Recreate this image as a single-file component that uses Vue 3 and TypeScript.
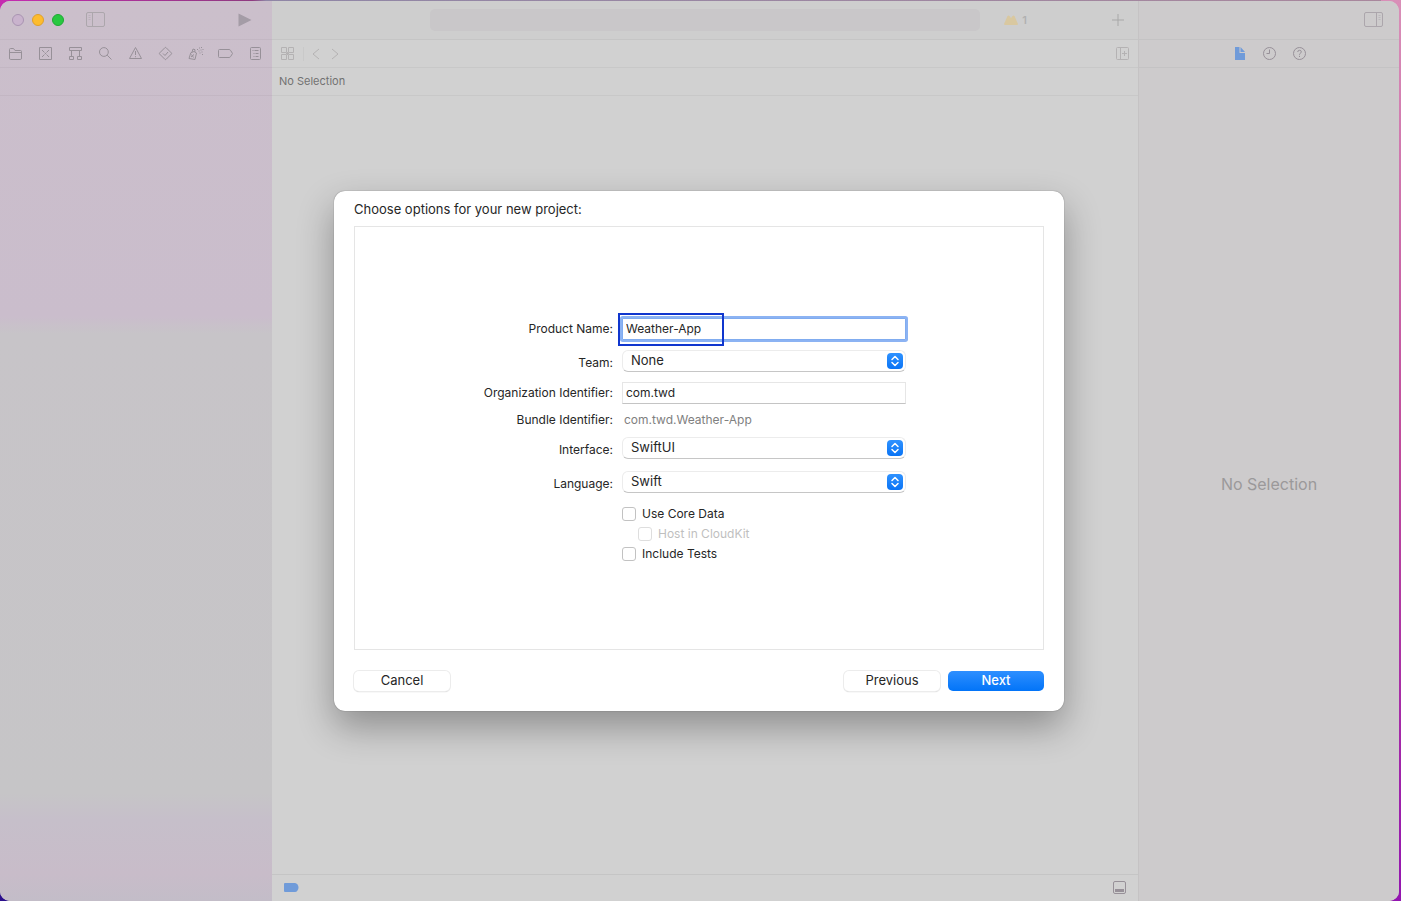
<script setup lang="ts">
import { ref } from 'vue'

const productName = ref('Weather-App')
const team = ref('None')
const organization = ref('com.twd')
const interfaceKind = ref('SwiftUI')
const language = ref('Swift')
const useCoreData = ref(false)
const hostInCloudKit = ref(false)
const includeTests = ref(false)

interface NavItem {
  label: string
  path: string
}

const navigators: NavItem[] = [
  { label: 'Project', path: 'M1.500 12V3.500Q1.500 2.500 2.500 2.500H5.500L7 4.500H12.500Q13.500 4.500 13.500 5.500V12Q13.500 13.500 12.500 13.500H2.500Q1.500 13.500 1.500 12M1.500 6.500h12' },
  { label: 'Source Control', path: 'M1.500 1.500h12v12h-12zM4 4l2.500 2.500M11 4L8.500 6.500M4 11l2.500-2.500M11 11L8.500 8.500M7 7.500h1' },
  { label: 'Symbols', path: 'M1.500 1.500h12v3h-12zM3.500 4.500v6M11.500 4.500v6M1.500 10.500h4v3h-4zM9.500 10.500h4v3h-4z' },
  { label: 'Find', path: 'M10.300 6a4.400 4.400 0 1 1-8.800 0a4.400 4.400 0 1 1 8.800 0M9.200 9.200L13.500 13.500' },
  { label: 'Issues', path: 'M7.500 1.500L13.500 12.500H1.500zM7.500 5v4M7.500 10.200v1' },
  { label: 'Tests', path: 'M6.900 1.700Q7.500 1.100 8.100 1.700L13.300 6.900Q13.900 7.500 13.300 8.100L8.100 13.300Q7.500 13.900 6.900 13.300L1.700 8.100Q1.100 7.500 1.700 6.900zM5 7.500l2 2L10 6' },
  { label: 'Debug', path: 'M2.800 6.800L6 5.500L8.500 7L7 13.500L1 12.500zM4 6L5 3L7 3.700L6.800 6M3.500 8.500l2 3M6 8.500L3 11M9 3.500h1M11 2h1M13 1.500h1M10.500 5h1M12.500 4h1M14.500 3.500h1M11.500 7h1M13.500 6h1M14 8.500h1' },
  { label: 'Breakpoints', path: 'M1.500 3.500h9.500Q12 3.500 12.700 4.500L14.500 7.500L12.700 10.500Q12 11.500 11 11.500H1.500Q.5 11.500 .5 10.500V4.500Q.5 3.500 1.500 3.500' },
  { label: 'Reports', path: 'M3.500 1.500h8q1 0 1 1v10q0 1-1 1h-8q-1 0-1-1v-10q0-1 1-1M4.500 4.500h1M6.500 4.500h4M5.500 7.500h1M7.500 7.500h3M5.500 10.500h1M7.500 10.500h3' },
]
</script>

<template>
  <div class="desktop">
    <div class="window">
      <aside class="navigator">
        <header class="bar title-bar">
          <div class="lights">
            <button class="light close" aria-label="Close"></button>
            <button class="light minimize" aria-label="Minimize"></button>
            <button class="light zoom" aria-label="Zoom"></button>
          </div>
          <button class="icon-button faint" aria-label="Toggle navigator">
            <svg width="20" height="16" viewBox="0 0 20 16"><rect x=".5" y=".5" width="18" height="14" rx="1.500" /><path d="M6.500 .5v14" /><path class="thin" d="M2.500 3.500h2M2.500 5.500h2M2.500 7.500h2" /></svg>
          </button>
          <button class="icon-button run" aria-label="Run">
            <svg width="14" height="14" viewBox="0 0 14 14"><path class="solid" d="M.5 .5L13.500 7L.5 13.500z" /></svg>
          </button>
        </header>
        <nav class="bar nav-icons">
          <button v-for="item in navigators" :key="item.label" class="icon-button" :aria-label="item.label">
            <svg width="16" height="16" viewBox="0 0 16 16"><path :d="item.path" /></svg>
          </button>
        </nav>
        <div class="bar strip"></div>
      </aside>

      <main class="editor">
        <header class="bar title-bar">
          <div class="activity"></div>
          <div class="status">
            <svg width="14" height="10" viewBox="0 0 14 10"><path d="M0 9L3.500 1Q4.500 0 5.500 1L7 3L8.500 1Q9.500 0 10.500 1L14 9Q14 10 13 10H1Q0 10 0 9" /></svg>
            <span>1</span>
          </div>
          <button class="icon-button plus" aria-label="Library">
            <svg width="14" height="14" viewBox="0 0 14 14"><path d="M7 1v12M1 7h12" /></svg>
          </button>
        </header>
        <div class="bar tab-bar">
          <button class="icon-button faint" aria-label="Related items">
            <svg width="14" height="14" viewBox="0 0 14 14"><path d="M.5 .5h5v5h-5zM7.500 .5h5v5h-5zM.5 7.500h5v5h-5zM7.500 7.500h5v5h-5zM5 6.500h3M6.500 5v3" /></svg>
          </button>
          <span class="divider"></span>
          <button class="icon-button faint" aria-label="Back">
            <svg width="8" height="12" viewBox="0 0 8 12"><path d="M7 1L1 6l6 5" /></svg>
          </button>
          <button class="icon-button faint forward" aria-label="Forward">
            <svg width="8" height="12" viewBox="0 0 8 12"><path d="M1 1l6 5l-6 5" /></svg>
          </button>
          <button class="icon-button faint add-editor" aria-label="Add editor">
            <svg width="14" height="14" viewBox="0 0 14 14"><rect x=".5" y=".5" width="12" height="12" rx="1" /><path d="M4.500 .5v12M6 6.500h5M8.500 4v5" /></svg>
          </button>
        </div>
        <div class="bar path-bar">No Selection</div>
        <div class="canvas"></div>
        <footer class="debug-bar">
          <button class="icon-button" aria-label="Breakpoints">
            <svg width="16" height="10" viewBox="0 0 16 10"><path class="blue" d="M1 0H11Q12.500 0 13.500 1.500Q15.500 4.500 13.500 7.500Q12.500 9 11 9H1Q0 9 0 8V1Q0 0 1 0" /></svg>
          </button>
          <button class="icon-button" aria-label="Toggle debug area">
            <svg width="14" height="14" viewBox="0 0 14 14"><rect x=".5" y=".5" width="12" height="12" rx="1.500" /><path class="solid" d="M2 8h9v3H2z" /></svg>
          </button>
        </footer>
      </main>

      <aside class="inspector">
        <header class="bar title-bar">
          <button class="icon-button faint" aria-label="Toggle inspector">
            <svg width="20" height="16" viewBox="0 0 20 16"><rect x=".5" y=".5" width="18" height="14" rx="1.500" /><path d="M12.500 .5v14" /><path class="thin" d="M14.500 3.500h2M14.500 5.500h2M14.500 7.500h2" /></svg>
          </button>
        </header>
        <nav class="bar inspector-icons">
          <button class="icon-button" aria-label="File">
            <svg width="14" height="14" viewBox="0 0 14 14"><path class="blue" d="M2 0h4.500v6H12v7H2zM7.500 0L12 5H7.500z" /></svg>
          </button>
          <button class="icon-button" aria-label="History">
            <svg width="14" height="14" viewBox="0 0 14 14"><circle cx="6.500" cy="6.500" r="6" /><path d="M6.500 2.500v4h-3" /></svg>
          </button>
          <button class="icon-button" aria-label="Help">
            <svg width="14" height="14" viewBox="0 0 14 14"><circle cx="6.500" cy="6.500" r="6" /><path d="M4.700 5Q4.800 3.300 6.500 3.300Q8.300 3.300 8.300 4.800Q8.300 5.800 7.300 6.300Q6.500 6.700 6.500 7.700M6.500 8.800v1.200" /></svg>
          </button>
        </nav>
        <div class="empty">No Selection</div>
      </aside>

      <div class="sheet-layer">
        <form class="sheet" role="dialog" aria-labelledby="sheet-title" @submit.prevent>
          <h1 id="sheet-title">Choose options for your new project:</h1>
          <div class="panel">
            <div class="fields">
              <label for="product">Product Name:</label>
              <div class="control">
                <input id="product" v-model="productName" class="text focused" type="text" />
                <span class="marker"></span>
              </div>

              <label for="team" class="popup-label">Team:</label>
              <div class="control">
                <select id="team" v-model="team"><option>None</option></select>
                <svg class="stepper" width="16" height="16" viewBox="0 0 16 16"><path d="M5 6.500L8 3.500L11 6.500M5 9.500L8 12.500L11 9.500" /></svg>
              </div>

              <label for="organization">Organization Identifier:</label>
              <div class="control">
                <input id="organization" v-model="organization" class="text" type="text" />
              </div>

              <span class="caption">Bundle Identifier:</span>
              <output class="bundle">{{ organization }}.{{ productName }}</output>

              <label for="interface" class="popup-label">Interface:</label>
              <div class="control">
                <select id="interface" v-model="interfaceKind"><option>SwiftUI</option><option>Storyboard</option></select>
                <svg class="stepper" width="16" height="16" viewBox="0 0 16 16"><path d="M5 6.500L8 3.500L11 6.500M5 9.500L8 12.500L11 9.500" /></svg>
              </div>

              <label for="language" class="popup-label">Language:</label>
              <div class="control">
                <select id="language" v-model="language"><option>Swift</option><option>Objective-C</option></select>
                <svg class="stepper" width="16" height="16" viewBox="0 0 16 16"><path d="M5 6.500L8 3.500L11 6.500M5 9.500L8 12.500L11 9.500" /></svg>
              </div>

              <div class="checks">
                <label class="check"><input v-model="useCoreData" type="checkbox" />Use Core Data</label>
                <label class="check nested"><input v-model="hostInCloudKit" type="checkbox" :disabled="!useCoreData" />Host in CloudKit</label>
                <label class="check"><input v-model="includeTests" type="checkbox" />Include Tests</label>
              </div>
            </div>
          </div>
          <div class="actions">
            <button type="button" class="push">Cancel</button>
            <button type="button" class="push previous">Previous</button>
            <button type="submit" class="push primary">Next</button>
          </div>
        </form>
      </div>
    </div>
  </div>
</template>

<style>
body {
  margin: 0;
}
</style>

<style scoped>
.desktop {
  box-sizing: border-box;
  height: 100vh;
  padding: 1px 2px 0 0;
  background:
    linear-gradient(180deg, transparent 50%, #2b0f8c 90%) left / 50% 100% no-repeat,
    linear-gradient(180deg, #d98fb8 0%, #c04a9c 50%, #9315b0 100%) right / 20px 100% no-repeat,
    linear-gradient(90deg, #c52bb0 0%, #8f3a80 18%, #8f86a6 19%, #a9879c 100%);
  font-family: Inter, "Liberation Sans", sans-serif;
  font-size: 12px;
  color: #262626;
}
.window {
  position: relative;
  display: grid;
  grid-template-columns: 272px 1fr 261px;
  height: 100%;
  overflow: hidden;
  border-radius: 10px;
  background: #d1d1d1;
}
.navigator,
.editor,
.inspector {
  display: flex;
  flex-direction: column;
  min-width: 0;
}
.navigator {
  background: linear-gradient(180deg, #cbbfcb 0, #cabdcc 35%, #c7c4c8 37%, #c6c5c7 88%, #c6bfca 91%, #c8bcc9 97%, #c3bdc8 100%);
}
.inspector {
  box-sizing: border-box;
  border-left: 1px solid #c5c3c4;
  background: #cdcbcc;
}
.bar {
  box-sizing: border-box;
  display: flex;
  align-items: center;
  height: 28px;
  flex: none;
  border-bottom: 1px solid rgba(0, 0, 0, 0.04);
}
.title-bar {
  height: 39px;
}
.editor .title-bar {
  background: #cecece;
}
.icon-button {
  display: flex;
  padding: 0;
  border: 0;
  background: none;
  color: #979098;
}
.icon-button svg {
  display: block;
  fill: none;
  stroke: currentColor;
  stroke-width: 1;
}
.icon-button .thin {
  opacity: 0.5;
}
.icon-button .solid {
  fill: currentColor;
  stroke: none;
}
.icon-button .blue {
  fill: #709bd9;
  stroke: none;
}
.icon-button.faint {
  color: #aca6ac;
}
.navigator .title-bar {
  padding: 0 20px 0 12px;
}
.lights {
  display: flex;
  gap: 8px;
  margin-right: 22px;
}
.light {
  box-sizing: border-box;
  width: 12px;
  height: 12px;
  padding: 0;
  border: 1px solid #a994b2;
  border-radius: 50%;
  background: #c9b3cd;
}
.minimize {
  border-color: #dfa02b;
  background: #fdbc2e;
}
.light.zoom {
  border-color: #1fa834;
  background: #28c840;
}
.run {
  margin-left: auto;
  color: #a49ca6;
}
.nav-icons {
  justify-content: space-between;
  padding: 0 8px;
}
.editor .title-bar {
  padding: 0 13px 0 158px;
}
.activity {
  flex: 1;
  height: 22px;
  border-radius: 5px;
  background: #c9c7c9;
}
.status {
  display: flex;
  align-items: center;
  gap: 4px;
  margin: 0 84px 0 24px;
  font-size: 11px;
  font-weight: 600;
  color: #b1b1b1;
}
.status svg {
  fill: #d9c8a0;
}
.icon-button.plus {
  color: #a8a8a8;
}
.tab-bar {
  padding: 0 8px 0 9px;
}
.editor .icon-button.faint {
  color: #b4b2b3;
}
.divider {
  width: 1px;
  height: 14px;
  margin: 0 8px;
  background: #c9c9c9;
}
.forward {
  margin-left: 11px;
}
.add-editor {
  margin-left: auto;
}
.path-bar {
  padding: 0 0 2px 7px;
  font-size: 11px;
  color: #717171;
}
.canvas {
  flex: 1;
}
.debug-bar {
  box-sizing: border-box;
  display: flex;
  align-items: center;
  justify-content: space-between;
  height: 27px;
  padding: 0 11px 0 12px;
  border-top: 1px solid #c5c5c5;
}
.inspector .title-bar {
  justify-content: flex-end;
  padding-right: 15px;
}
.inspector-icons {
  gap: 16px;
  padding-left: 94px;
}
.empty {
  flex: 1;
  display: flex;
  align-items: center;
  justify-content: center;
  padding-bottom: 2px;
  font-size: 16px;
  color: #9b999a;
}
.sheet-layer {
  position: absolute;
  inset: 0;
  display: flex;
  align-items: center;
  justify-content: center;
  padding-right: 1px;
}
.sheet {
  box-sizing: border-box;
  width: 730px;
  padding: 8px 20px 20px;
  border-radius: 11px;
  background: #fff;
  box-shadow: 0 0 1px rgba(0, 0, 0, 0.6), 0 16px 36px rgba(0, 0, 0, 0.32);
}
h1 {
  margin: 0 0 7px;
  font-size: 13px;
  line-height: 20px;
  font-weight: 400;
}
.panel {
  box-sizing: border-box;
  display: flex;
  align-items: center;
  justify-content: center;
  height: 424px;
  padding-right: 11px;
  border: 1px solid #e5e5e5;
}
.fields {
  display: grid;
  grid-template-columns: 132px 284px;
  grid-template-rows: 32px 32px 32px 22px 34px 34px auto;
  column-gap: 9px;
  align-items: center;
}
.fields > label,
.caption {
  text-align: right;
  white-space: nowrap;
}
.fields > .popup-label {
  padding-top: 3px;
}
.control {
  position: relative;
  display: flex;
}
.text,
select {
  box-sizing: border-box;
  width: 100%;
  height: 22px;
  margin: 0;
  border: 1px solid #e6e6e6;
  background: #fff;
  font: inherit;
  color: inherit;
  outline: none;
}
.text {
  padding: 0 3px;
  border-bottom-color: #c4c4c4;
}
.text.focused {
  border-color: #80acf0;
  border-radius: 1px;
  box-shadow: 0 0 0 2px #8cb3f3;
}
.marker {
  position: absolute;
  top: -5px;
  left: -4px;
  box-sizing: border-box;
  width: 106px;
  height: 33px;
  border: 2px solid #1036ce;
  pointer-events: none;
}
select {
  appearance: none;
  padding: 0 8px 2px;
  border-color: #ececec;
  border-bottom-color: #c6c6c6;
  border-radius: 6px;
  font-size: 13px;
}
.stepper {
  position: absolute;
  top: 3px;
  right: 3px;
  border-radius: 4px;
  background: linear-gradient(#2f92ff, #0a74f5);
  fill: none;
  stroke: #fff;
  stroke-width: 1.5;
  stroke-linecap: round;
  stroke-linejoin: round;
  pointer-events: none;
}
.bundle {
  padding-left: 2px;
  color: #808080;
}
.checks {
  grid-column: 2;
  margin-top: 5px;
}
.check {
  display: flex;
  align-items: center;
  gap: 6px;
  height: 20px;
}
.check input {
  appearance: none;
  box-sizing: border-box;
  width: 14px;
  height: 14px;
  margin: 0;
  border: 1px solid #c2c2c2;
  border-radius: 3px;
  background: #fff;
}
.check input:checked {
  background: #0a74f5;
}
.nested {
  margin-left: 16px;
  color: #bfbfbf;
}
.nested input {
  border-color: #dedede;
}
.actions {
  display: flex;
  align-items: center;
  gap: 8px;
  margin-top: 21px;
}
.push {
  box-sizing: border-box;
  width: 96px;
  height: 20px;
  padding: 0 0 2px;
  border: 0;
  border-radius: 5px;
  background: #fff;
  box-shadow: 0 0 0 1px #ececec, 0 1px 1px rgba(0, 0, 0, 0.3);
  font: inherit;
  font-size: 13px;
  line-height: 18px;
  color: inherit;
}
.previous {
  margin-left: auto;
}
.primary {
  background: linear-gradient(#2e8fff, #0274f8);
  box-shadow: none;
  font-weight: 500;
  color: #fff;
}
</style>
